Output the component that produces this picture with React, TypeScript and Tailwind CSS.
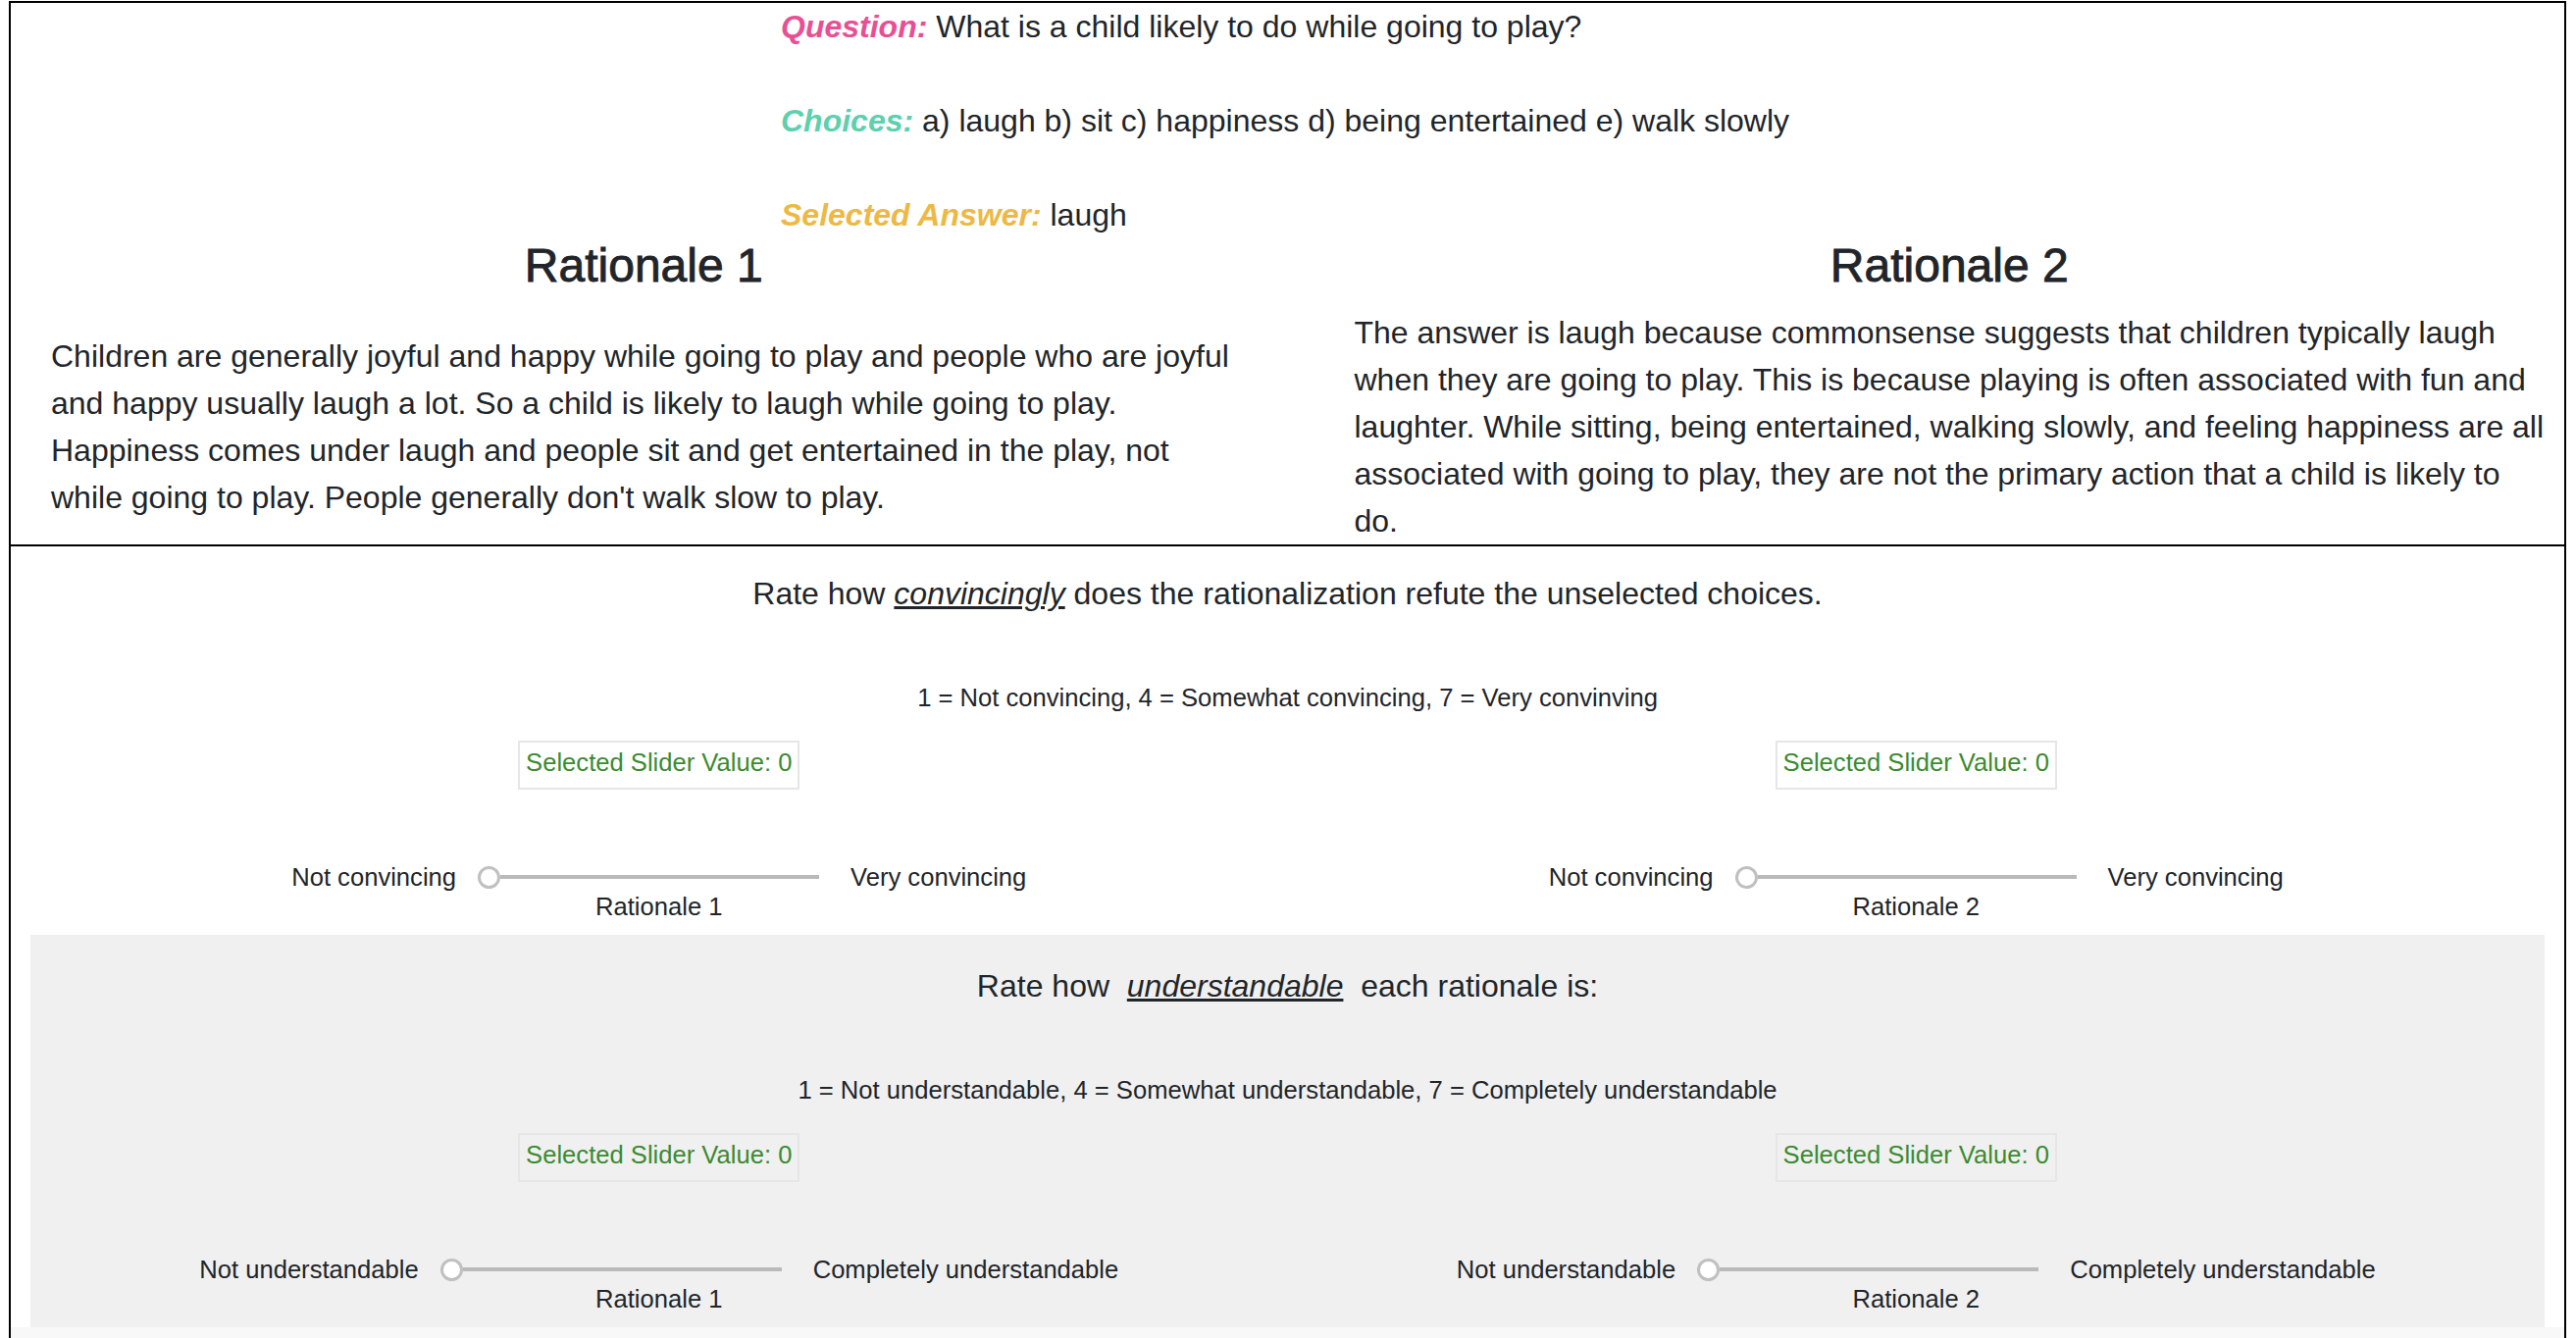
import type { ReactNode } from "react";

// slider is drawn by hand: thumb parked at 0 with the track running off to the right
const Slider = () => (
  <div className="ml-[22px] mr-[32px] flex h-[24px] w-[348px] items-center">
    <div className="h-[23px] w-[23px] shrink-0 rounded-full border-[3px] border-[#c0c0c0] bg-white" />
    <div className="h-[4px] flex-1 bg-[#bababa]" />
  </div>
);

function RatingCol({ low, high, label }: { low: string; high: string; label: string }) {
  return (
    <div className="flex flex-col items-center">
      <div className="mt-[25px] h-[50px] w-[287px] border-2 border-[#e6e6e6] pt-[5px] text-center leading-[30px] text-[#3b8b30]">
        Selected Slider Value: 0
      </div>
      <div className="mt-[74px] flex items-center leading-[30px]">
        <span>{low}</span>
        <Slider />
        <span>{high}</span>
      </div>
      <div className="leading-[30px]">{label}</div>
    </div>
  );
}

function RatingSection({ gray, title, scale, low, high }: {
  gray?: boolean; title: ReactNode; scale: string; low: string; high: string;
}) {
  return (
    <div className={gray ? "mx-[20px] bg-[#f0f0f0] pb-[14px] pt-[28px] text-[25.6px]" : "mx-[20px] pb-[14px] pt-[24px] text-[25.6px]"}>
      <p className="text-center text-[32px] leading-[48px]">{title}</p>
      <p className="mt-[63px] text-center leading-[38px]">{scale}</p>
      <div className="grid grid-cols-2">
        <RatingCol low={low} high={high} label="Rationale 1" />
        <RatingCol low={low} high={high} label="Rationale 2" />
      </div>
    </div>
  );
}

export default function App() {
  return (
    <div className="min-h-screen bg-white font-['Liberation_Sans',Arial,sans-serif] text-[#212529]">
      <div className="ml-[9px] mt-[1px] w-[2607px] border-x-2 border-t-2 border-black">
        <div className="border-b-2 border-black">
          <div className="pl-[785px] pt-[3px] text-[32px] leading-[42px]">
            <p className="mb-[54px]">
              <b className="italic text-[#e84f94]">Question:</b> What is a child likely to do while going to play?
            </p>
            <p className="mb-[54px]">
              <b className="italic text-[#5dd0ae]">Choices:</b> a) laugh b) sit c) happiness d) being entertained e) walk slowly
            </p>
            <p>
              <b className="italic text-[#edb944]">Selected Answer:</b> laugh
            </p>
          </div>

          <div className="mt-[2px] flex text-[48px] leading-[58px] [-webkit-text-stroke:0.9px_#212529]">
            <h2 className="w-1/2 pl-[41px] pr-[52px] text-center">Rationale 1</h2>
            <h2 className="w-1/2 pl-[68px] pr-[20px] text-center">Rationale 2</h2>
          </div>

          <div className="mt-[15px] flex items-center text-[32px] leading-[48px]">
            <p className="w-1/2 pl-[41px] pr-[52px]">
              Children are generally joyful and happy while going to play and people who are joyful and happy
              usually laugh a lot. So a child is likely to laugh while going to play. Happiness comes under laugh
              and people sit and get entertained in the play, not while going to play. People generally don't walk
              slow to play.
            </p>
            <p className="w-1/2 pl-[68px] pr-[18px]">
              The answer is laugh because commonsense suggests that children typically laugh when they are going to
              play. This is because playing is often associated with fun and laughter. While sitting, being
              entertained, walking slowly, and feeling happiness are all associated with going to play, they are not
              the primary action that a child is likely to do.
            </p>
          </div>
        </div>

        <RatingSection
          title={<>Rate how <u className="italic">convincingly</u> does the rationalization refute the unselected choices.</>}
          scale="1 = Not convincing, 4 = Somewhat convincing, 7 = Very convinving"
          low="Not convincing"
          high="Very convincing"
        />
        <RatingSection
          gray
          title={<>Rate how{"\u00a0 "}<u className="italic">understandable</u>{"\u00a0 "}each rationale is:</>}
          scale="1 = Not understandable, 4 = Somewhat understandable, 7 = Completely understandable"
          low="Not understandable"
          high="Completely understandable"
        />
        <div className="h-[60px] bg-[#f8f8f8]" />
      </div>
    </div>
  );
}
